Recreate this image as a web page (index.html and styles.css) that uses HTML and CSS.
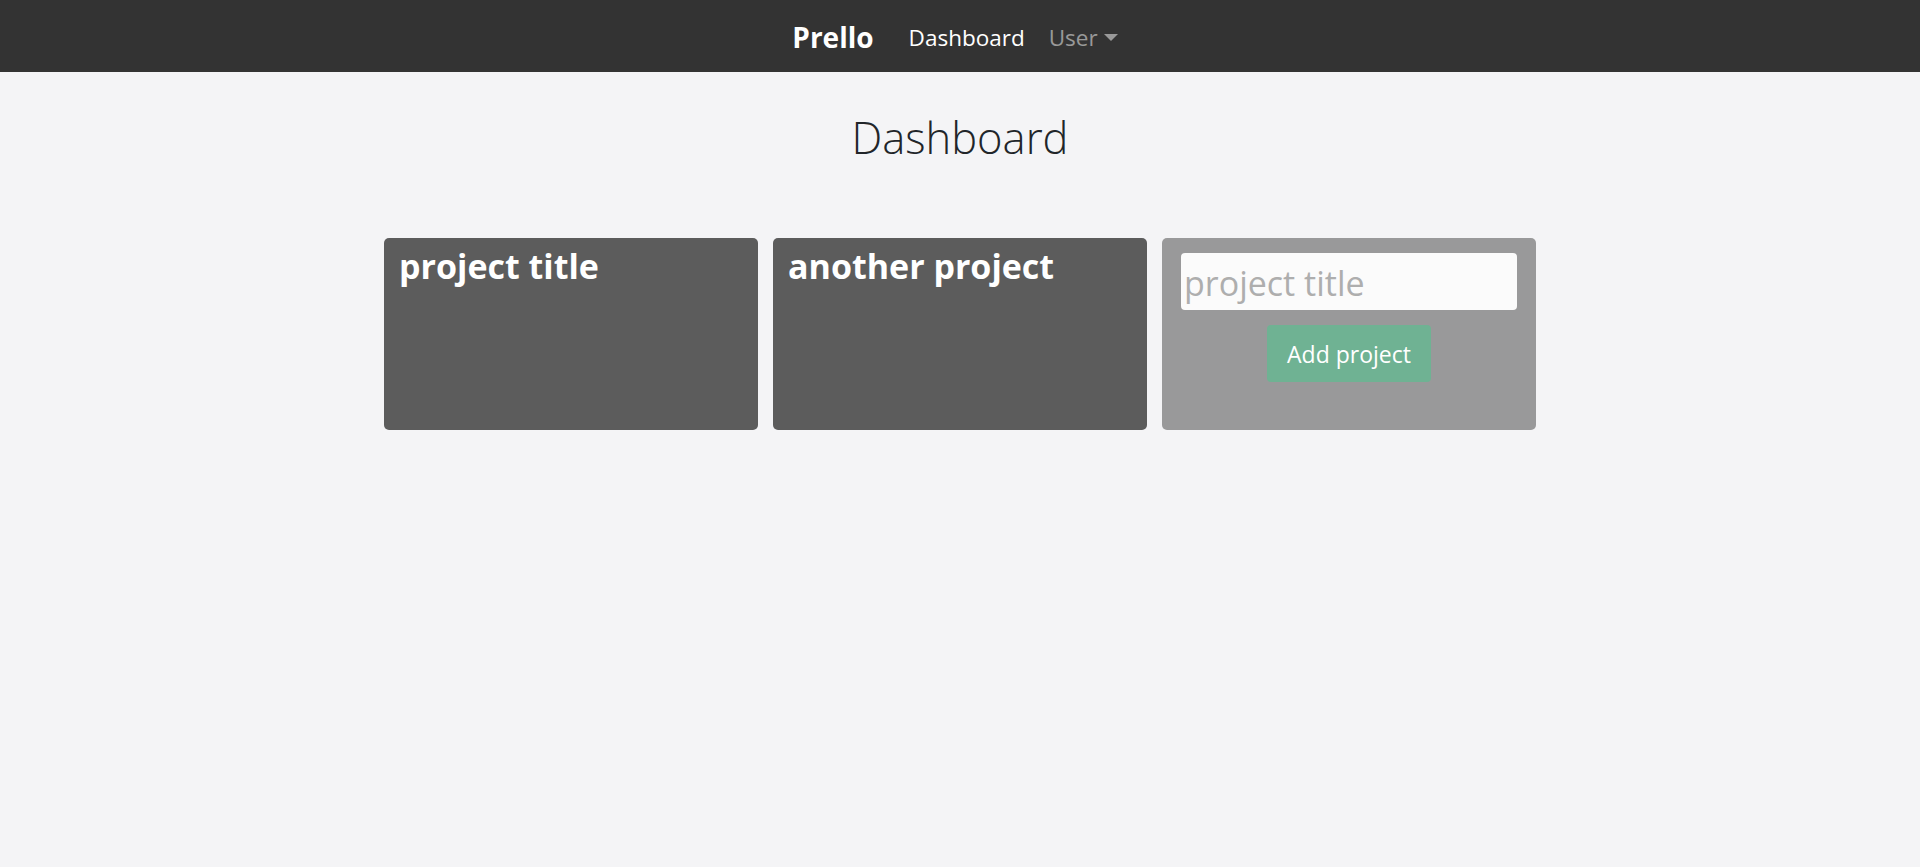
FILE: index.html
```html
<!DOCTYPE html>
<html lang="en">
<head>
<meta charset="utf-8">
<title>Prello</title>
<link rel="stylesheet" href="styles.css">
</head>
<body>
<nav class="navbar">
  <a class="brand" href="#">Prello</a>
  <a class="nav-link active" href="#">Dashboard</a>
  <a class="nav-link dropdown" href="#">User<span class="caret"></span></a>
</nav>
<main class="main">
  <h1 class="page-title">Dashboard</h1>
  <div class="projects">
    <div class="card card-dark"><h2 class="card-title">project title</h2></div>
    <div class="card card-dark"><h2 class="card-title">another project</h2></div>
    <div class="card card-new">
      <input class="title-input" type="text" placeholder="project title">
      <button class="btn-add" type="button">Add project</button>
    </div>
  </div>
</main>
</body>
</html>
```
FILE: styles.css
```css
* { box-sizing: border-box; }
html, body { margin: 0; padding: 0; }
body {
  background: #f4f4f6;
  font-family: "Open Sans", "Noto Sans", sans-serif;
  color: #212529;
  height: 867px;
}
.navbar {
  height: 72px;
  background: #333333;
  display: flex;
  align-items: center;
  justify-content: center;
  padding: 2px 10px 0 0;
}
.navbar a { text-decoration: none; }
.brand {
  color: #fff;
  font-weight: 700;
  font-size: 28px;
  margin-right: 35px;
}
.nav-link {
  font-size: 22.5px;
  color: rgba(255,255,255,0.5);
  display: flex;
  align-items: center;
}
.nav-link.active { color: #fff; margin-right: 24px; }
.caret {
  display: inline-block;
  width: 0; height: 0;
  margin-left: 6px;
  border-left: 7px solid transparent;
  border-right: 7px solid transparent;
  border-top: 7px solid rgba(255,255,255,0.5);
}
.main {
  display: flex;
  flex-direction: column;
  align-items: center;
}
.page-title {
  margin: 40px 0 74px;
  font-size: 43.5px;
  font-weight: 300;
  line-height: 52px;
}
.projects {
  width: 1152px;
  display: grid;
  grid-template-columns: repeat(3, 1fr);
  gap: 15px;
}
.card {
  height: 192px;
  border-radius: 5px;
  padding: 8px 15px;
}
.card-dark { background: #5c5c5c; }
.card-title {
  margin: 0;
  color: #fff;
  font-size: 34px;
  font-weight: 700;
  line-height: 1.2;
}
.card-new {
  background: #99999a;
  display: flex;
  flex-direction: column;
  align-items: center;
  padding: 15px 19px;
  gap: 15px;
}
.title-input {
  width: 100%;
  height: 57px;
  border: none;
  border-radius: 4px;
  background: #fbfbfb;
  padding: 2px 3px 0;
  font-family: inherit;
  font-size: 34px;
  color: #495057;
}
.title-input::placeholder { color: #aeaeae; }
.btn-add {
  height: 57px;
  padding: 0 20px;
  border: none;
  border-radius: 4px;
  background: #6fb293;
  color: #fff;
  font-family: inherit;
  font-size: 23px;
}
```
